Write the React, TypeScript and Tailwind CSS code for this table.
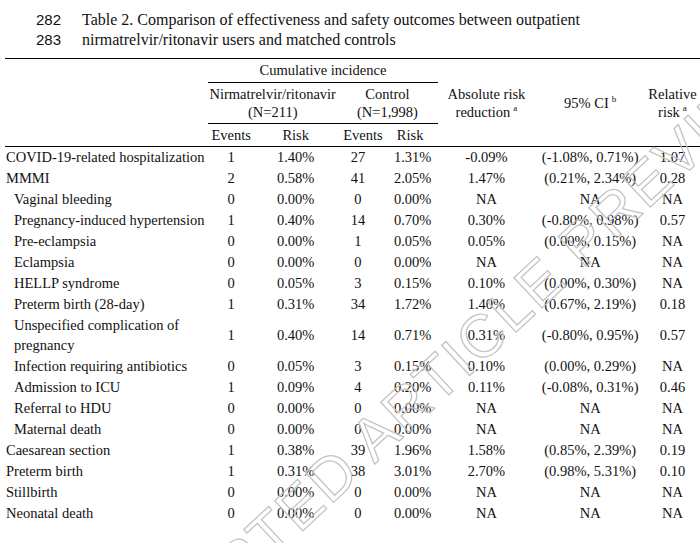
const rows: { label: string; indent?: boolean; tall?: boolean; v: string[] }[] = [
  { label: "COVID-19-related hospitalization", v: ["1", "1.40%", "27", "1.31%", "-0.09%", "(-1.08%, 0.71%)", "1.07"] },
  { label: "MMMI", v: ["2", "0.58%", "41", "2.05%", "1.47%", "(0.21%, 2.34%)", "0.28"] },
  { label: "Vaginal bleeding", indent: true, v: ["0", "0.00%", "0", "0.00%", "NA", "NA", "NA"] },
  { label: "Pregnancy-induced hypertension", indent: true, v: ["1", "0.40%", "14", "0.70%", "0.30%", "(-0.80%, 0.98%)", "0.57"] },
  { label: "Pre-eclampsia", indent: true, v: ["0", "0.00%", "1", "0.05%", "0.05%", "(0.00%, 0.15%)", "NA"] },
  { label: "Eclampsia", indent: true, v: ["0", "0.00%", "0", "0.00%", "NA", "NA", "NA"] },
  { label: "HELLP syndrome", indent: true, v: ["0", "0.05%", "3", "0.15%", "0.10%", "(0.00%, 0.30%)", "NA"] },
  { label: "Preterm birth (28-day)", indent: true, v: ["1", "0.31%", "34", "1.72%", "1.40%", "(0.67%, 2.19%)", "0.18"] },
  { label: "Unspecified complication of|pregnancy", indent: true, tall: true, v: ["1", "0.40%", "14", "0.71%", "0.31%", "(-0.80%, 0.95%)", "0.57"] },
  { label: "Infection requiring antibiotics", indent: true, v: ["0", "0.05%", "3", "0.15%", "0.10%", "(0.00%, 0.29%)", "NA"] },
  { label: "Admission to ICU", indent: true, v: ["1", "0.09%", "4", "0.20%", "0.11%", "(-0.08%, 0.31%)", "0.46"] },
  { label: "Referral to HDU", indent: true, v: ["0", "0.00%", "0", "0.00%", "NA", "NA", "NA"] },
  { label: "Maternal death", indent: true, v: ["0", "0.00%", "0", "0.00%", "NA", "NA", "NA"] },
  { label: "Caesarean section", v: ["1", "0.38%", "39", "1.96%", "1.58%", "(0.85%, 2.39%)", "0.19"] },
  { label: "Preterm birth", v: ["1", "0.31%", "38", "3.01%", "2.70%", "(0.98%, 5.31%)", "0.10"] },
  { label: "Stillbirth", v: ["0", "0.00%", "0", "0.00%", "NA", "NA", "NA"] },
  { label: "Neonatal death", v: ["0", "0.00%", "0", "0.00%", "NA", "NA", "NA"] },
]

function Sup({ c }: { c: string }) {
  return <sup className="text-[9px] relative -top-[6px] ml-[3px]">{c}</sup>
}

export default function App() {
  return (
    <div className="relative w-[700px] h-[543px] overflow-hidden bg-white text-[#111]">
      {/* caption */}
      <div className="pt-[10px] pl-[36px] leading-[20px]">
        <div className="flex">
          <span className="w-[46px] text-[15px] font-['Liberation_Sans',sans-serif]">282</span>
          <span className="text-[16px] font-['Liberation_Serif',serif]">
            Table 2. Comparison of effectiveness and safety outcomes between outpatient
          </span>
        </div>
        <div className="flex">
          <span className="w-[46px] text-[15px] font-['Liberation_Sans',sans-serif]">283</span>
          <span className="text-[16px] font-['Liberation_Serif',serif]">nirmatrelvir/ritonavir users and matched controls</span>
        </div>
      </div>

      <table className="ml-[5px] mt-[8px] table-fixed border-collapse text-[14.5px] leading-[20px] font-['Liberation_Serif',serif]">
        <colgroup>
          <col className="w-[204px]" />
          <col className="w-[46px]" />
          <col className="w-[83px]" />
          <col className="w-[44px]" />
          <col className="w-[55px]" />
          <col className="w-[98px]" />
          <col className="w-[110px]" />
          <col className="w-[55px]" />
        </colgroup>
        <thead>
          <tr className="h-[23.5px]">
            <th rowSpan={3} className="border-t-[1.5px] border-b-[1.5px] border-black"></th>
            <th colSpan={4} className="font-normal border-t-[1.5px] border-b border-black p-0">
              Cumulative incidence
            </th>
            <th rowSpan={3} className="font-normal leading-[18px] border-t-[1.5px] border-b-[1.5px] border-black p-0">
              Absolute risk
              <br />
              reduction<Sup c="a" />
            </th>
            <th rowSpan={3} className="font-normal border-t-[1.5px] border-b-[1.5px] border-black p-0">
              95% CI<Sup c="b" />
            </th>
            <th rowSpan={3} className="font-normal leading-[18px] border-t-[1.5px] border-b-[1.5px] border-black p-0">
              Relative
              <br />
              risk<Sup c="a" />
            </th>
          </tr>
          <tr className="h-[41.5px]">
            <th colSpan={2} className="font-normal leading-[18px] border-b border-black p-0">
              Nirmatrelvir/ritonavir
              <br />
              (N=211)
            </th>
            <th colSpan={2} className="font-normal leading-[18px] border-b border-black p-0">
              Control
              <br />
              (N=1,998)
            </th>
          </tr>
          <tr className="h-[23px]">
            <th className="font-normal border-b-[1.5px] border-black p-0">Events</th>
            <th className="font-normal border-b-[1.5px] border-black p-0">Risk</th>
            <th className="font-normal border-b-[1.5px] border-black p-0 pl-[6px]">Events</th>
            <th className="font-normal border-b-[1.5px] border-black p-0">Risk</th>
          </tr>
        </thead>
        <tbody>
          {rows.map((r) => (
            <tr key={r.label} className={r.tall ? "h-[41px]" : "h-[21px]"}>
              <td className={`p-0 ${r.indent ? "pl-[9px]" : "pl-[1px]"}`}>
                {r.label.split("|").map((part, i) => (
                  <div key={i}>{part}</div>
                ))}
              </td>
              {r.v.map((val, i) => (
                <td key={i} className={`p-0 text-center ${i === 2 ? "pr-[4px]" : ""} ${i === 3 ? "pl-[5px]" : ""}`}>
                  {val}
                </td>
              ))}
            </tr>
          ))}
        </tbody>
      </table>

      {/* watermark overlay */}
      <div className="pointer-events-none absolute left-[-22px] top-[353px] w-[900px] origin-center -rotate-[43deg] whitespace-nowrap text-center text-[60px] leading-[68px] tracking-[2px] font-['Liberation_Sans',sans-serif] text-transparent [-webkit-text-stroke:1.3px_#c4c4c4]">
        ACCEPTED ARTICLE PREVIEW
      </div>
    </div>
  )
}
